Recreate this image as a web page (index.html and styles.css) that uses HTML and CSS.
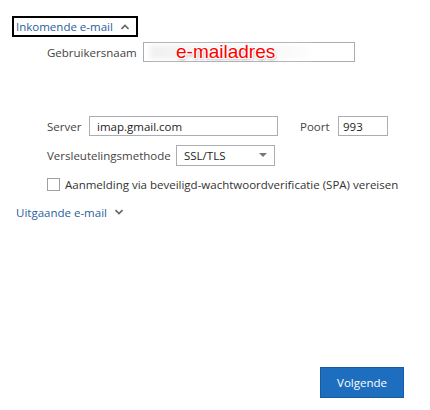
FILE: index.html
```html
<!DOCTYPE html>
<html lang="nl">
<head>
    <meta charset="UTF-8">
    <title>Accountinstellingen</title>
    <link rel="stylesheet" href="styles.css">
</head>
<body>
    <div class="page">
        <div class="toggle toggle-open">
            <span>Inkomende e-mail</span>
            <svg width="8" height="6" viewBox="0 0 8 6"><path d="M0.5 5 L4 1.5 L7.5 5" fill="none" stroke="#666" stroke-width="1.6"/></svg>
        </div>

        <div class="row row-user">
            <label class="lbl lbl-user">Gebruikersnaam</label>
            <div class="field field-user">
                <span class="smudge"></span>
                <span class="redacted">e-mailadres</span>
            </div>
        </div>

        <div class="row row-server">
            <label class="lbl lbl-server">Server</label>
            <div class="field field-server">imap.gmail.com</div>
            <label class="lbl lbl-port">Poort</label>
            <div class="field field-port">993</div>
        </div>

        <div class="row row-enc">
            <label class="lbl lbl-enc">Versleutelingsmethode</label>
            <div class="field field-select">
                <span>SSL/TLS</span>
                <svg width="8" height="5" viewBox="0 0 8 5"><path d="M0 0 H8 L4 4 Z" fill="#777"/></svg>
            </div>
        </div>

        <div class="row row-check">
            <span class="checkbox"></span>
            <span class="check-text">Aanmelding via beveiligd-wachtwoordverificatie (SPA) vereisen</span>
        </div>

        <div class="toggle toggle-closed">
            <span>Uitgaande e-mail</span>
            <svg width="8" height="6" viewBox="0 0 8 6"><path d="M0.5 1 L4 4.5 L7.5 1" fill="none" stroke="#666" stroke-width="1.6"/></svg>
        </div>

        <div class="footer">
            <button type="button" class="next-btn">Volgende</button>
        </div>
    </div>
</body>
</html>
```

FILE: styles.css
```css
body {
    margin: 0;
    background: #fff;
    font-family: "Open Sans", "Noto Sans", sans-serif;
    font-size: 11.5px;
    color: #444;
}

.page {
    width: 430px;
    height: 410px;
    padding-top: 16px;
    box-sizing: border-box;
    display: flex;
    flex-direction: column;
}

.toggle {
    display: flex;
    align-items: center;
    gap: 8px;
    color: #2a5e9c;
}

.toggle-open {
    align-self: flex-start;
    margin-left: 12px;
    height: 17px;
    padding: 0 7px 0 2px;
    border: 2px solid #000;
}

.toggle-closed {
    margin: 12px 0 0 16px;
    height: 16px;
}

.row {
    display: flex;
    align-items: center;
    margin-left: 47px;
}

.row-user {
    margin-top: 5px;
}

.row-server {
    margin-top: 54px;
}

.row-enc {
    margin-top: 9px;
}

.row-check {
    margin-top: 11px;
}

.lbl-user { width: 96px; }
.lbl-server { width: 42px; }
.lbl-port { width: 38px; margin-left: 22px; }
.lbl-enc { width: 129px; }

.field {
    box-sizing: border-box;
    height: 20px;
    border: 1px solid #abadb3;
    background: #fff;
    color: #1e1e1e;
    display: flex;
    align-items: center;
    padding-left: 7px;
}

.field-user {
    width: 212px;
    position: relative;
}

.smudge {
    position: absolute;
    left: 6px;
    top: 2px;
    width: 160px;
    height: 14px;
    background: linear-gradient(90deg, #f1f1f1, #f6f6f6 70%, #fdfdfd);
    filter: blur(2px);
}

.redacted {
    position: relative;
    margin-left: 25px;
    line-height: 18px;
    font-family: "Liberation Sans", Arial, sans-serif;
    font-size: 19px;
    color: #f00;
    text-shadow: 1px 1px 0 #fff, -1px -1px 0 #fff, 1px -1px 0 #fff, -1px 1px 0 #fff, 1px 2px 3px rgba(0, 0, 0, 0.35);
}

.field-server { width: 189px; }
.field-port { width: 50px; padding-left: 4px; }

.field-select {
    width: 99px;
    height: 21px;
    justify-content: space-between;
    padding-right: 7px;
}

.checkbox {
    width: 11px;
    height: 11px;
    border: 1px solid #a0a0a0;
    background: #fff;
}

.check-text {
    margin-left: 5px;
    color: #333;
}

.footer {
    margin-top: auto;
    display: flex;
    justify-content: flex-end;
    padding: 0 26px 12px 0;
}

.next-btn {
    width: 84px;
    height: 31px;
    border: 1px solid #175ca3;
    background: #1e6ebf;
    color: #fff;
    font-family: "Open Sans", "Noto Sans", sans-serif;
    font-size: 11.5px;
    padding: 0;
}
```
